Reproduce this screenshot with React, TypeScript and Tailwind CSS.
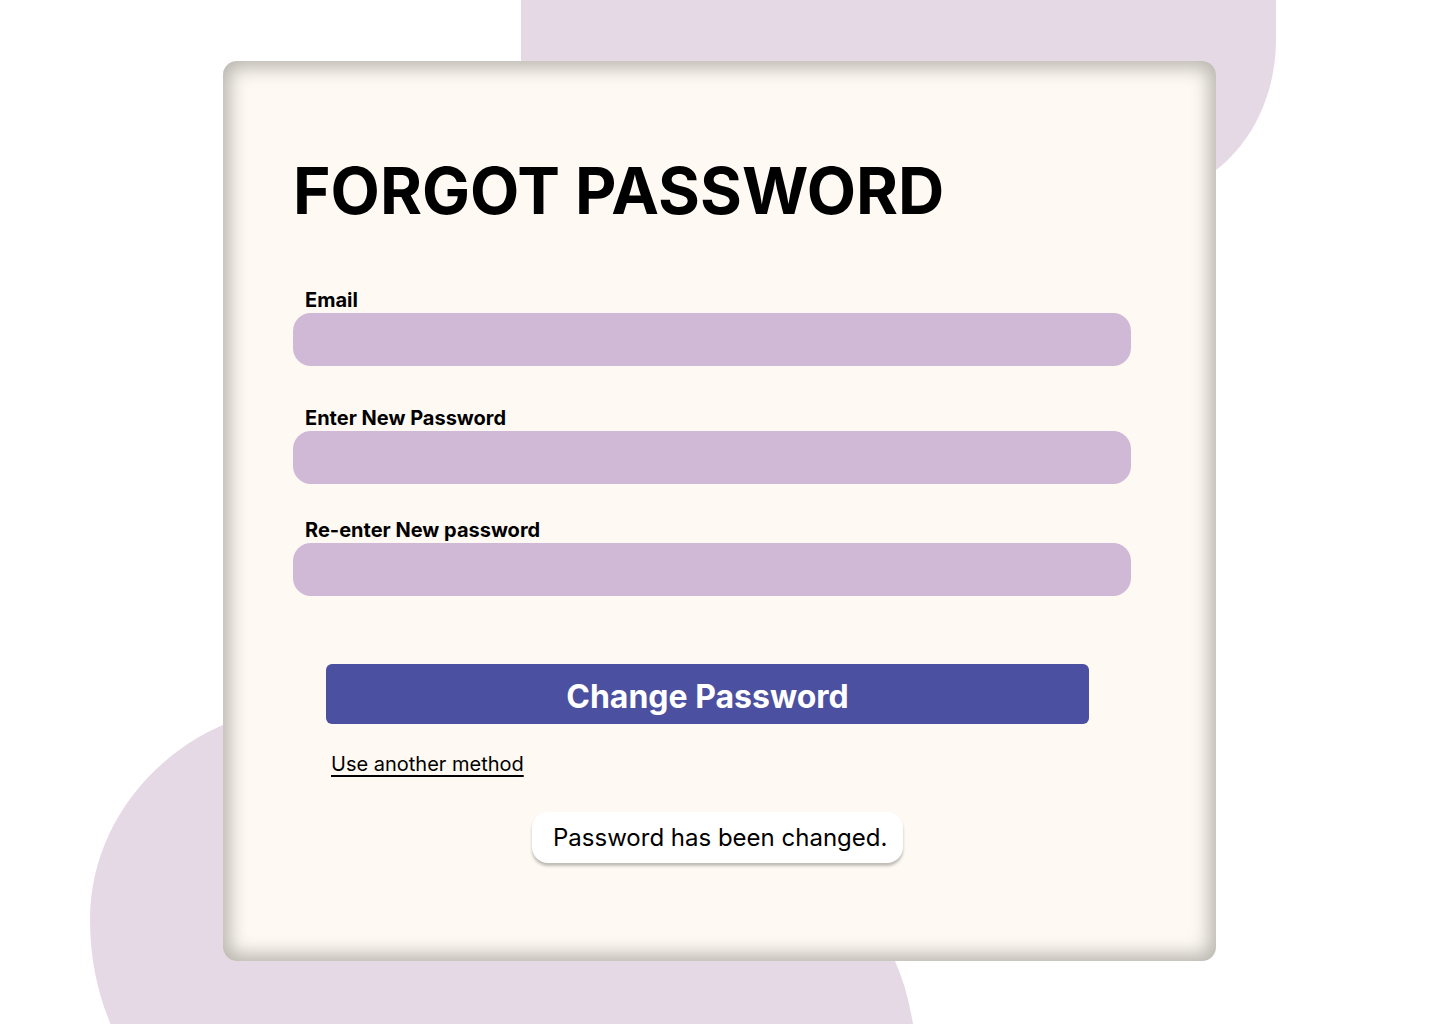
import React from 'react';

function Field({ label, top }: { label: string; top: string }) {
  return (
    <div className={top}>
      <label className="block pl-3 text-[20px] leading-[22px] font-bold text-black mb-[2px]">{label}</label>
      <input
        type="text"
        className="block w-[838px] h-[53px] rounded-[18px] bg-[#cfb9d6] outline-none px-5"
      />
    </div>
  );
}

export default function App() {
  return (
    <div className="relative w-[1440px] h-[1024px] overflow-hidden bg-white font-['Inter',sans-serif]">
      {/* background blobs */}
      <svg className="absolute inset-0" width="1440" height="1024" viewBox="0 0 1440 1024">
        <path
          d="M521 -10 L1276 -10 L1276 40 C1276 90 1255 140 1216 170 L1190 190 L521 190 Z"
          fill="#e6d9e6"
        />
        <path
          d="M300 700 L240 718 C150 750 90 830 90 920 C90 965 100 1000 113 1030 L914 1030 Q908 990 895 961 L895 700 Z"
          fill="#e6d9e6"
        />
      </svg>

      <div className="relative pt-[61px] pl-[223px]">
        <div className="w-[993px] h-[900px] rounded-[14px] bg-[#fefaf3] shadow-[inset_0_0_18px_7px_#bab6b0] pl-[70px] pt-[98px]">
          <h1 className="text-[64px] leading-none font-bold text-black">FORGOT PASSWORD</h1>

          <Field label="Email" top="mt-[66px]" />
          <Field label="Enter New Password" top="mt-[41px]" />
          <Field label="Re-enter New password" top="mt-[35px]" />

          <button className="mt-[68px] ml-[33px] w-[763px] h-[60px] pt-[5px] rounded-[6px] bg-[#4b50a0] text-white text-[32px] font-bold">
            Change Password
          </button>

          <div className="mt-[28px] ml-[38px]">
            <a href="#" className="text-[20px] leading-[24px] text-black underline underline-offset-[4px]">
              Use another method
            </a>
          </div>

          <div className="mt-[35px] ml-[239px] inline-flex items-center h-[51px] pl-[21px] pr-[16px] rounded-[16px] bg-white shadow-[0_3px_3px_rgba(0,0,0,0.25)]">
            <span className="text-[24px] text-black">Password has been changed.</span>
          </div>
        </div>
      </div>
    </div>
  );
}
